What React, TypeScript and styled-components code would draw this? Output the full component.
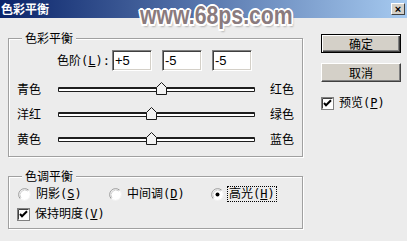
import styled, { createGlobalStyle } from "styled-components";

const GlobalStyle = createGlobalStyle`
  html, body {
    margin: 0;
    padding: 0;
    background: #ececec;
  }
  body {
    font-family: "DejaVu Sans Mono", "Noto Sans CJK SC", monospace;
    font-size: 12px;
    color: #000;
  }
`;

// window frame
const Window = styled.div`
  position: relative;
  width: 407px;
  height: 241px;
  background: #ececec;
  overflow: hidden;
`;

const TitleBar = styled.div`
  height: 18px;
  display: flex;
  align-items: center;
  justify-content: space-between;
  padding: 0 2px 0 1px;
  background: linear-gradient(to right, #0a246a, #a6caf0);
`;

const Title = styled.span`
  font-family: "Noto Sans CJK SC", sans-serif;
  font-weight: bold;
  font-size: 12px;
  line-height: 14px;
  color: #fff;
`;

const CloseBox = styled.div`
  width: 14px;
  height: 12px;
  box-sizing: border-box;
  background: #d4d0c8;
  border: 1px solid;
  border-color: #fff #404040 #404040 #fff;
  display: flex;
  align-items: center;
  justify-content: center;
  font: bold 11px/1 "Liberation Sans", sans-serif;
  color: #000;
`;

const Watermark = styled.div`
  position: absolute;
  left: 140px;
  top: 1px;
  font: bold 25px/28px "Liberation Sans", sans-serif;
  color: #8a7b7e;
  transform: scaleX(0.85);
  transform-origin: left center;
  text-shadow: -2px 0 #fff, 2px 0 #fff, 0 -2px #fff, 0 2px #fff,
    -1.5px -1.5px #fff, 1.5px 1.5px #fff, -1.5px 1.5px #fff, 1.5px -1.5px #fff,
    2px 3px 2px rgba(0, 0, 0, 0.25);
  pointer-events: none;
`;

// layout
const Body = styled.div`
  display: flex;
  align-items: flex-start;
  padding-left: 8px;
`;

const LeftCol = styled.div`
  width: 295px;
  display: flex;
  flex-direction: column;
`;

const Group = styled.fieldset<{ $top: number; $pad: string }>`
  box-sizing: border-box;
  width: 100%;
  min-width: 0;
  margin: ${(p) => p.$top}px 0 0;
  padding: ${(p) => p.$pad};
  border: 1px solid #a0a0a0;
  box-shadow: 1px 1px 0 #fff, inset 1px 1px 0 #fff;
`;

const Legend = styled.legend`
  padding: 0 3px;
  margin-left: 5px;
  line-height: 14px;
  font-family: "Noto Sans CJK SC", sans-serif;
  background: #ececec;
`;

// color levels
const LevelsRow = styled.div`
  display: flex;
  align-items: center;
  height: 21px;
  padding-left: 38px;
`;

const LevelsLabel = styled.span`
  width: 57px;
  flex: none;
  text-align: right;
  padding-right: 2px;
  box-sizing: border-box;
  line-height: 14px;
  white-space: nowrap;
`;

const Fields = styled.div`
  display: flex;
  gap: 10px;
`;

const Field = styled.input`
  width: 40px;
  height: 21px;
  box-sizing: border-box;
  margin: 0;
  padding: 0 2px;
  background: #fff;
  border: 1px solid;
  border-color: #808080 #fff #fff #808080;
  box-shadow: inset 1px 1px 0 #404040, inset -1px -1px 0 #d4d0c8;
  font: 13px/1 "Liberation Sans", sans-serif;
  color: #000;
  outline: none;
`;

const SliderRow = styled.div<{ $first?: boolean }>`
  display: grid;
  grid-template-columns: 41px 197px 1fr;
  align-items: center;
  height: 25px;
  margin-top: ${(p) => (p.$first ? "6px" : "0")};
  line-height: 14px;
`;

const EndLabel = styled.span`
  padding-left: 15px;
`;

const Track = styled.div`
  position: relative;
  height: 5px;
  box-sizing: border-box;
  background: #fff;
  border: 1px solid #1e1e1e;
  border-top-width: 2px;
  border-radius: 1px;
`;

const Thumb = styled.svg`
  position: absolute;
  top: -7px;
  width: 11px;
  height: 13px;
`;

// tone balance
const RadioRow = styled.div`
  display: grid;
  grid-template-columns: 91px 102px auto;
  align-items: center;
  height: 16px;
  margin-left: 1px;
`;

const Option = styled.label`
  display: flex;
  align-items: center;
  gap: 4px;
  line-height: 14px;
  white-space: nowrap;
`;

const OptionText = styled.span<{ $focus?: boolean }>`
  padding: 0 1px;
  outline: ${(p) => (p.$focus ? "1px dotted #000" : "none")};
`;

const CheckRow = styled(Option)<{ $gap: number }>`
  height: 16px;
  margin-top: ${(p) => p.$gap}px;
`;

// buttons column
const RightCol = styled.div`
  display: flex;
  flex-direction: column;
  margin-left: 18px;
  padding-top: 16px;
`;

const Button = styled.button<{ $default?: boolean }>`
  width: 80px;
  height: 19px;
  box-sizing: border-box;
  margin: 0 0 10px;
  padding: 0;
  background: #d4d0c8;
  border: 1px solid;
  border-color: ${(p) => (p.$default ? "#000" : "#fff #404040 #404040 #fff")};
  box-shadow: ${(p) =>
    p.$default
      ? "inset 1px 1px 0 #fff, inset -1px -1px 0 #404040, inset -2px -2px 0 #808080"
      : "inset -1px -1px 0 #808080"};
  font: 12px/1 "Noto Sans CJK SC", sans-serif;
  color: #000;
`;

function Radio({ on }: { on?: boolean }) {
  return (
    <svg width="13" height="13" viewBox="0 0 13 13">
      <circle cx="6.5" cy="6.5" r="5.5" fill="#fff" />
      <path d="M2.26 10.74 A6 6 0 0 1 10.74 2.26" fill="none" stroke="#9a9a9a" />
      <path d="M10.74 2.26 A6 6 0 0 1 2.26 10.74" fill="none" stroke="#f4f4f4" />
      <path d="M3 10 A5 5 0 0 1 10 3" fill="none" stroke="#d0d0d0" />
      {on && <circle cx="6.5" cy="6.5" r="2" fill="#000" />}
    </svg>
  );
}

function Check() {
  return (
    <svg width="13" height="13" viewBox="0 0 13 13">
      <rect x="0.5" y="0.5" width="12" height="12" fill="#fff" stroke="#808080" />
      <path d="M1.5 11.5 V1.5 H11.5" fill="none" stroke="#404040" />
      <path d="M3 6 L5 8.2 L10 3.2" fill="none" stroke="#000" strokeWidth="2" />
    </svg>
  );
}

const sliders = [
  { left: "青色", right: "红色", value: 5 },
  { left: "洋红", right: "绿色", value: -5 },
  { left: "黄色", right: "蓝色", value: -5 },
];

export default function App() {
  return (
    <Window>
      <GlobalStyle />
      <TitleBar>
        <Title>色彩平衡</Title>
        <CloseBox>×</CloseBox>
      </TitleBar>
      <Watermark>www.68ps.com</Watermark>
      <Body>
        <LeftCol>
          <Group $top={13} $pad="5px 8px 4px">
            <Legend>色彩平衡</Legend>
            <LevelsRow>
              <LevelsLabel>
                色阶(<u>L</u>):
              </LevelsLabel>
              <Fields>
                <Field defaultValue="+5" />
                <Field defaultValue="-5" />
                <Field defaultValue="-5" />
              </Fields>
            </LevelsRow>
            {sliders.map((s, i) => (
              <SliderRow key={s.left} $first={i === 0}>
                <span>{s.left}</span>
                <Track>
                  <Thumb
                    viewBox="0 0 11 13"
                    style={{ left: `calc(${(s.value + 100) / 2}% - 5.5px)` }}
                  >
                    <polygon
                      points="5.5,0.5 10.5,5.5 10.5,12.5 0.5,12.5 0.5,5.5"
                      fill="#f2f2f2"
                      stroke="#1a1a1a"
                    />
                  </Thumb>
                </Track>
                <EndLabel>{s.right}</EndLabel>
              </SliderRow>
            ))}
          </Group>
          <Group $top={12} $pad="3px 8px 6px">
            <Legend>色调平衡</Legend>
            <RadioRow>
              <Option>
                <Radio />
                <OptionText>
                  阴影(<u>S</u>)
                </OptionText>
              </Option>
              <Option>
                <Radio />
                <OptionText>
                  中间调(<u>D</u>)
                </OptionText>
              </Option>
              <Option>
                <Radio on />
                <OptionText $focus>
                  高光(<u>H</u>)
                </OptionText>
              </Option>
            </RadioRow>
            <CheckRow $gap={4}>
              <Check />
              <OptionText>
                保持明度(<u>V</u>)
              </OptionText>
            </CheckRow>
          </Group>
        </LeftCol>
        <RightCol>
          <Button $default>确定</Button>
          <Button>取消</Button>
          <CheckRow $gap={3}>
            <Check />
            <OptionText>
              预览(<u>P</u>)
            </OptionText>
          </CheckRow>
        </RightCol>
      </Body>
    </Window>
  );
}
